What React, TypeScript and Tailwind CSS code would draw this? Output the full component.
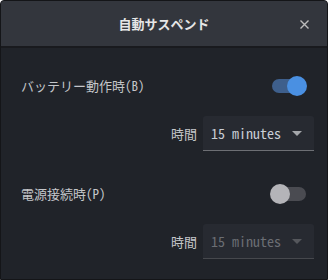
import React, { useState } from 'react';

const font = "font-['Noto_Sans_Mono_CJK_JP','Noto_Sans_CJK_JP','DejaVu_Sans_Mono',monospace]";

const Toggle: React.FC<{ on: boolean; onClick: () => void }> = ({ on, onClick }) => (
  <button onClick={onClick} className="relative w-[38px] h-[22px] flex items-center">
    <span className={`absolute left-[2px] w-[34px] h-[14px] rounded-full ${on ? 'bg-[#3e5f8c]' : 'bg-[#4a4b51]'}`} />
    <span
      className={`absolute top-[1px] w-[20px] h-[20px] rounded-full ${on ? 'left-[17px] bg-[#4a90e2]' : 'left-0 bg-[#b4b4b8]'}`}
    />
  </button>
);

const Select: React.FC<{ value: string; disabled?: boolean }> = ({ value, disabled }) => (
  <div
    className={`w-[111px] h-[35px] flex items-center justify-between pl-[8px] pr-[12px] rounded-t-[3px] bg-[#272a31] border-b ${
      disabled ? 'border-[#46484d] text-[#6b6e74]' : 'border-[#6d6f74] text-[#c9ced6]'
    }`}
  >
    <span className="text-[14px]">{value}</span>
    <svg width="10" height="5" viewBox="0 0 10 5">
      <path d="M0 0h10L5 5z" fill={disabled ? '#55575c' : '#a4a6aa'} />
    </svg>
  </div>
);

const App: React.FC = () => {
  const [battery, setBattery] = useState(true);
  const [power, setPower] = useState(false);

  return (
    <div className={`w-[328px] h-[280px] flex flex-col border border-[#141518] rounded-t-[4px] overflow-hidden bg-[#202329] ${font}`}>
      <div className="h-[47px] shrink-0 relative flex items-center justify-center bg-[#33363d] border-b-2 border-[#191a1e]">
        <span className="text-[13px] font-bold text-[#e6e6e6]">自動サスペンド</span>
        <svg className="absolute right-[18px] top-[19px]" width="9" height="9" viewBox="0 0 9 9">
          <path d="M0.5 0.5l8 8M8.5 0.5l-8 8" stroke="#bcbcbc" strokeWidth="1.4" />
        </svg>
      </div>

      <div className="flex-1 flex flex-col pl-[20px] pr-[13px] pt-[24px]">
        <div className="h-[28px] flex items-center justify-between pr-[6px]">
          <span className="text-[13px] text-[#c4c6ca]">バッテリー動作時(B)</span>
          <Toggle on={battery} onClick={() => setBattery(!battery)} />
        </div>
        <div className="flex items-center justify-end gap-[6px] mt-[16px]">
          <span className="text-[13px] text-[#c4c6ca]">時間</span>
          <Select value="15 minutes" />
        </div>

        <div className="h-[28px] flex items-center justify-between pr-[6px] mt-[29px]">
          <span className="text-[13px] text-[#c4c6ca]">電源接続時(P)</span>
          <Toggle on={power} onClick={() => setPower(!power)} />
        </div>
        <div className="flex items-center justify-end gap-[6px] mt-[16px]">
          <span className="text-[13px] text-[#c4c6ca]">時間</span>
          <Select value="15 minutes" disabled />
        </div>
      </div>
    </div>
  );
};

export default App;
